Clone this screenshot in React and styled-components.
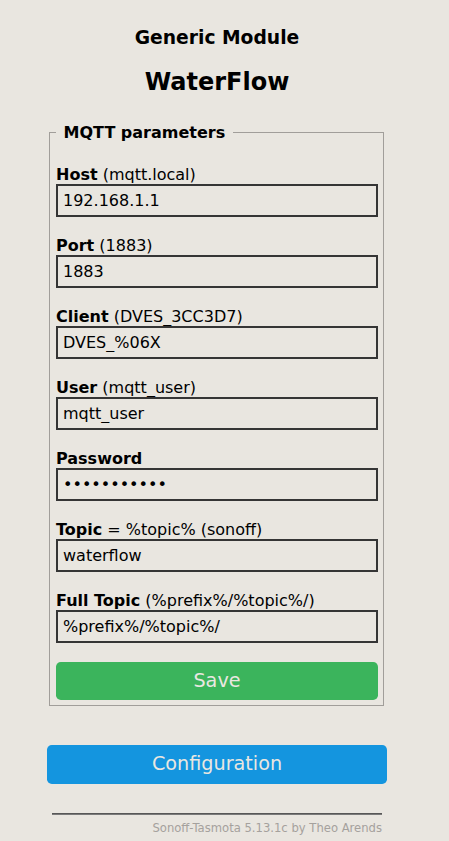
import React from "react";
import styled, { createGlobalStyle } from "styled-components";

const GlobalStyle = createGlobalStyle`
  html, body {
    margin: 0;
    padding: 0;
    background: #e9e6e0;
  }
  body {
    font-family: "DejaVu Sans", Verdana, sans-serif;
    font-size: 16px;
    color: #000;
  }
`;

const Page = styled.div`
  width: 340px;
  margin-left: 47px;
  padding-top: 8px;
  padding-bottom: 8px;
`;

const Header = styled.header`
  text-align: center;
`;

const Subtitle = styled.h3`
  font-size: 18.72px;
  font-weight: bold;
  line-height: 22px;
  margin: 19px 0 0;
`;

const Title = styled.h2`
  font-size: 24px;
  font-weight: bold;
  line-height: 28px;
  margin: 19px 0 27px;
`;

const Fieldset = styled.fieldset`
  margin: 0 3px 1px 2px;
  padding: 0 5px 5px 6px;
  border: 1px solid #a19e9a;
  min-width: 0;
`;

const Legend = styled.legend`
  font-weight: bold;
  padding: 0 2px;
  line-height: 19px;
`;

const Form = styled.form`
  display: flex;
  flex-direction: column;
  padding-top: 23px;
`;

const Field = styled.div`
  display: flex;
  flex-direction: column;
  margin-bottom: 19px;
`;

const Label = styled.label`
  line-height: 19px;
  white-space: nowrap;
`;

const Strong = styled.b`
  font-weight: bold;
`;

const Input = styled.input`
  box-sizing: border-box;
  width: 100%;
  height: 33px;
  margin: 0;
  padding: 5px;
  border: 2px solid #353535;
  background: transparent;
  font-family: "DejaVu Sans", Verdana, sans-serif;
  font-size: 16px;
  color: #000;
  outline: none;
`;

const Button = styled.button`
  display: block;
  width: 100%;
  border: 0;
  border-radius: 4.8px;
  background: ${(p) => p.$bg};
  color: #eae7e1;
  font-family: "DejaVu Sans", Verdana, sans-serif;
  font-size: 19.2px;
  line-height: 38.4px;
  height: 38.4px;
  padding: 0;
  cursor: pointer;
`;

const NavForm = styled.form`
  margin-top: 39px;
`;

const Footer = styled.footer`
  padding: 0 5px;
  margin-top: 29px;
  text-align: right;
`;

const Rule = styled.hr`
  margin: 0;
  border: 0;
  border-top: 1px solid #575757;
  border-bottom: 1px solid #7a7a7a;
  height: 0;
`;

const Credit = styled.div`
  font-size: 11.6px;
  color: #a5a19d;
  line-height: 13px;
  margin-top: 7px;
  white-space: nowrap;
`;

const fields = [
  { key: "host", label: "Host", hint: " (mqtt.local)", value: "192.168.1.1" },
  { key: "port", label: "Port", hint: " (1883)", value: "1883" },
  { key: "client", label: "Client", hint: " (DVES_3CC3D7)", value: "DVES_%06X" },
  { key: "user", label: "User", hint: " (mqtt_user)", value: "mqtt_user" },
  { key: "password", label: "Password", hint: "", value: "12345678901", type: "password" },
  { key: "topic", label: "Topic", hint: " = %topic% (sonoff)", value: "waterflow" },
  { key: "full", label: "Full Topic", hint: " (%prefix%/%topic%/)", value: "%prefix%/%topic%/" },
];

export default function App() {
  return (
    <>
      <GlobalStyle />
      <Page>
        <Header>
          <Subtitle>Generic Module</Subtitle>
          <Title>WaterFlow</Title>
        </Header>
        <Fieldset>
          <Legend>{"\u00a0MQTT parameters\u00a0"}</Legend>
          <Form onSubmit={(e) => e.preventDefault()}>
            {fields.map((f) => (
              <Field key={f.key}>
                <Label htmlFor={f.key}>
                  <Strong>{f.label}</Strong>
                  {f.hint}
                </Label>
                <Input id={f.key} type={f.type || "text"} defaultValue={f.value} />
              </Field>
            ))}
            <Button type="submit" $bg="#3bb45c">Save</Button>
          </Form>
        </Fieldset>
        <NavForm onSubmit={(e) => e.preventDefault()}>
          <Button type="submit" $bg="#1495df">Configuration</Button>
        </NavForm>
        <Footer>
          <Rule />
          <Credit>Sonoff-Tasmota 5.13.1c by Theo Arends</Credit>
        </Footer>
      </Page>
    </>
  );
}
